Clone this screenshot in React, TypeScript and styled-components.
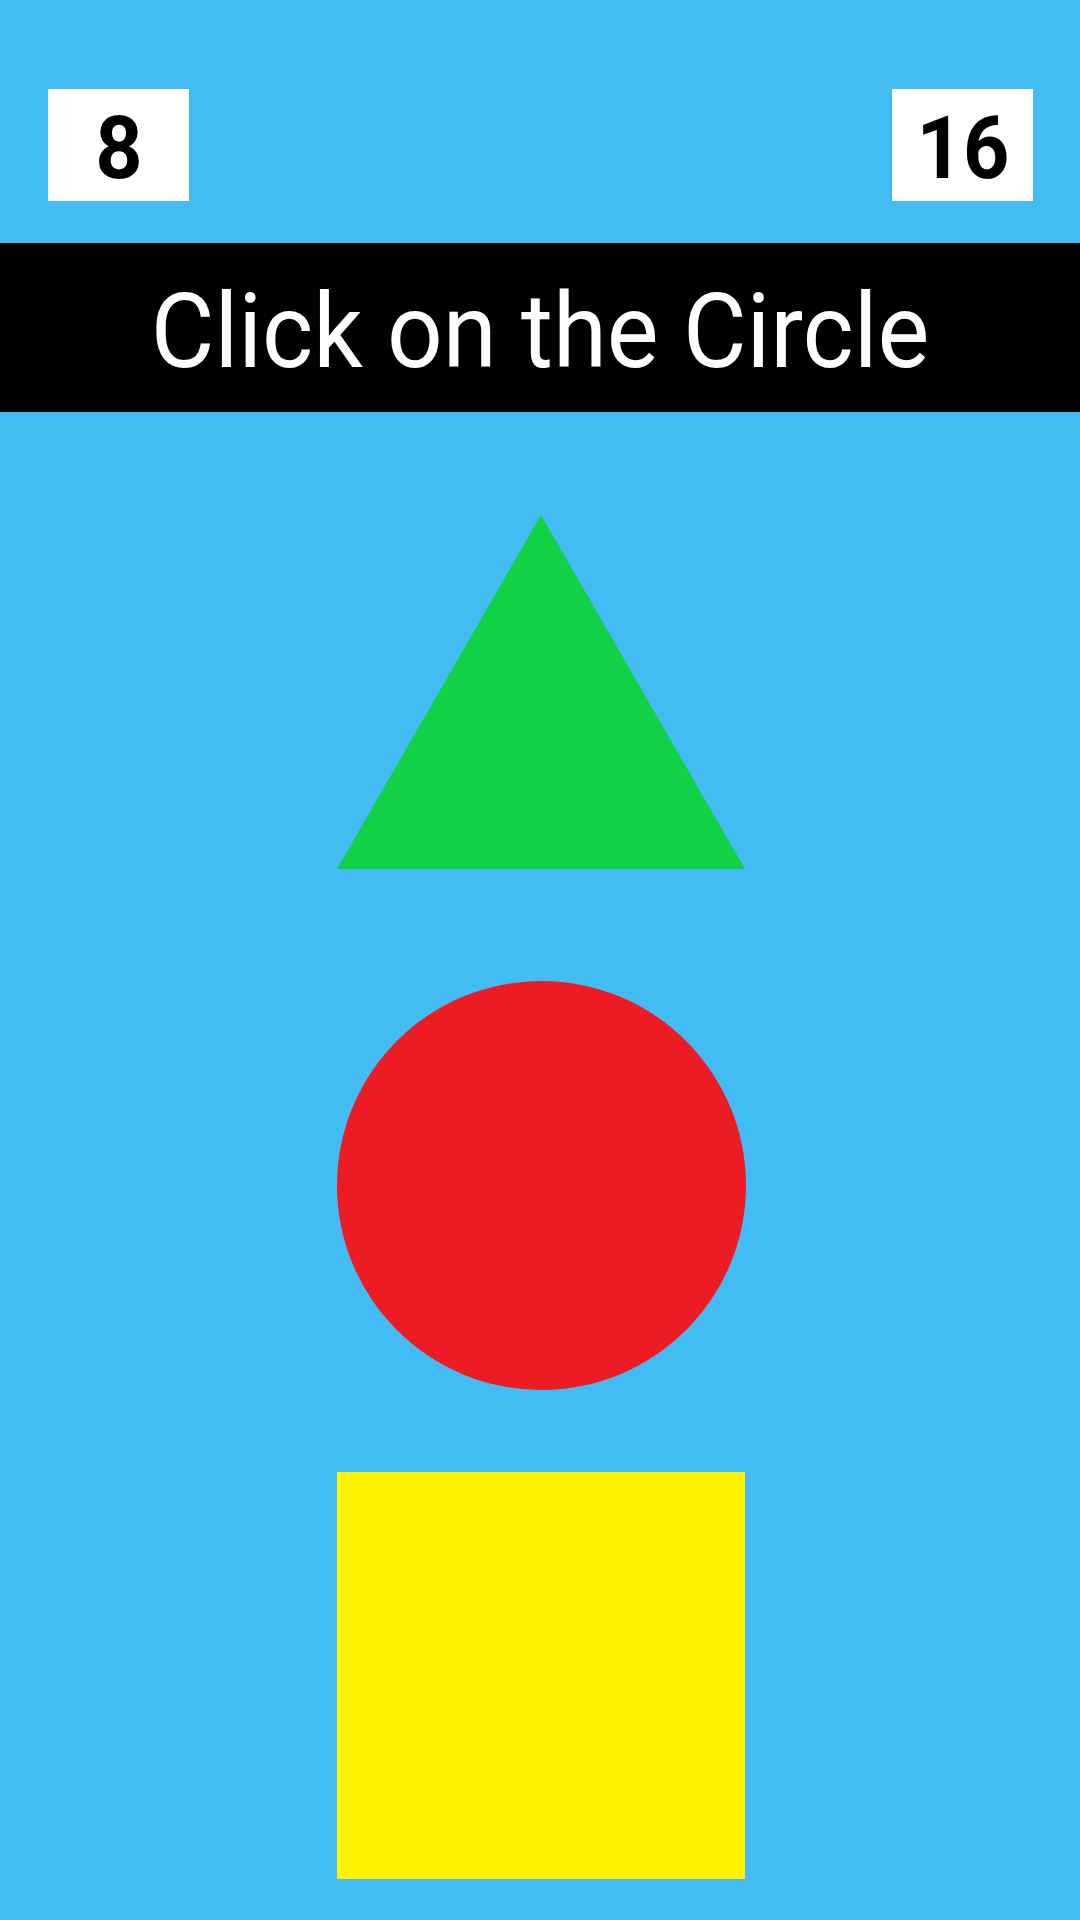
import React from "react";
import styled, { createGlobalStyle } from "styled-components";

const GlobalStyle = createGlobalStyle`
  html, body {
    margin: 0;
    padding: 0;
    background: #43bcf3;
  }
  body {
    font-family: Roboto, "Liberation Sans", Arial, sans-serif;
  }
`;

const Screen = styled.div`
  width: 1080px;
  height: 1920px;
  background: #43bcf3;
  display: flex;
  flex-direction: column;
  overflow: hidden;
`;

const ScoreRow = styled.div`
  display: flex;
  justify-content: space-between;
  align-items: flex-start;
  padding: 89px 47px 0 48px;
  height: 243px;
  box-sizing: border-box;
`;

const ScoreBox = styled.div`
  width: 141px;
  height: 112px;
  background: #ffffff;
  display: flex;
  align-items: center;
  justify-content: center;
  padding-top: 6px;
  box-sizing: border-box;
  color: #000;
  font-family: Roboto, "Liberation Sans", Arial, sans-serif;
  font-weight: 700;
  font-size: 87px;
  line-height: 1;
`;

// the app's text is drawn slightly narrow
const Narrow = styled.span<{ $scale: number }>`
  display: inline-block;
  transform: scaleX(${(p) => p.$scale});
  white-space: nowrap;
`;

const Banner = styled.div`
  height: 169px;
  background: #000000;
  color: #ffffff;
  display: flex;
  align-items: center;
  justify-content: center;
  padding-top: 8px;
  box-sizing: border-box;
  font-family: Roboto, "Liberation Sans", Arial, sans-serif;
  font-size: 104px;
  font-weight: 400;
  line-height: 1;
`;

const Board = styled.div`
  display: flex;
  flex-direction: column;
  align-items: center;
  padding-left: 2px;
`;

const Slot = styled.div<{ $top: number }>`
  margin-top: ${(p) => p.$top}px;
  display: flex;
`;

const Circle = styled.div`
  width: 409px;
  height: 409px;
  border-radius: 50%;
  background: #ed1c24;
  cursor: pointer;
`;

const Square = styled.div`
  width: 408px;
  height: 407px;
  background: #fff200;
  cursor: pointer;
`;

const Triangle = () => (
  <svg width="408" height="354" viewBox="0 0 408 354" style={{ display: "block", cursor: "pointer" }}>
    <polygon points="204,0 408,354 0,354" fill="#11d147" />
  </svg>
);

export default function App() {
  return (
    <Screen>
      <GlobalStyle />
      <ScoreRow>
        <ScoreBox>
          <Narrow $scale={0.95}>8</Narrow>
        </ScoreBox>
        <ScoreBox>
          <Narrow $scale={0.93}>16</Narrow>
        </ScoreBox>
      </ScoreRow>
      <Banner>
        <Narrow $scale={0.94}>Click on the Circle</Narrow>
      </Banner>
      <Board>
        <Slot $top={103}>
          <Triangle />
        </Slot>
        <Slot $top={112}>
          <Circle />
        </Slot>
        <Slot $top={82}>
          <Square />
        </Slot>
      </Board>
    </Screen>
  );
}
